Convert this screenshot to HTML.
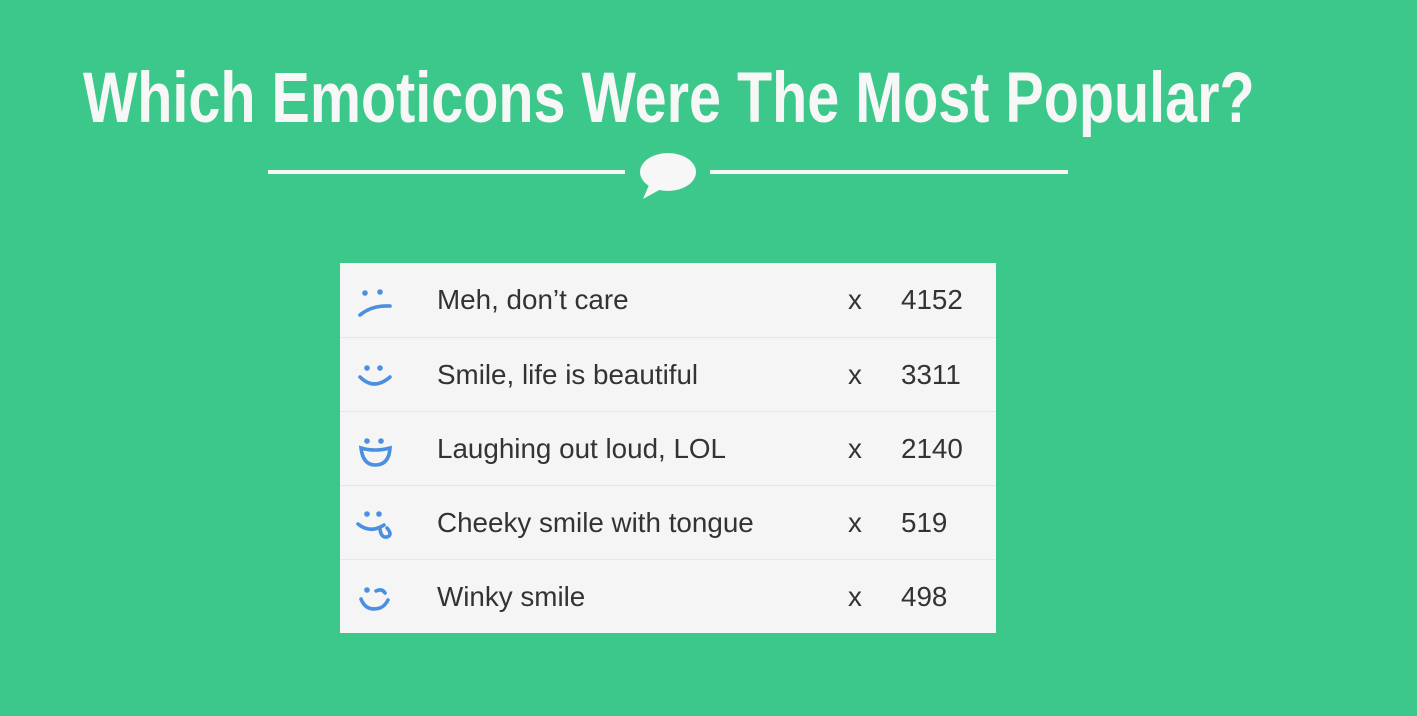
<!DOCTYPE html>
<html><head><meta charset="utf-8"><style>
html,body{margin:0;padding:0}
body{width:1417px;height:716px;background:#3dc88b;position:relative;overflow:hidden;font-family:"Liberation Sans",sans-serif}
h1{position:absolute;left:83px;top:54px;margin:0;font-family:"Liberation Sans Narrow","Liberation Sans",sans-serif;font-weight:bold;font-size:71px;line-height:90px;color:#f7f7f8;white-space:nowrap;transform-origin:0 0;transform:scaleX(0.81);letter-spacing:0px}
.line{position:absolute;top:170px;height:4px;background:#f7f7f8}
.tbl{position:absolute;left:340px;top:263px;width:656px;height:370px;background:#f5f5f5}
.row{position:relative;height:74px;border-top:1px solid #e6e6e6;box-sizing:border-box;font-size:27.8px;color:#333}
.row:first-child{border-top:none}
.row svg{position:absolute;left:16px;top:19px}
.row .t{position:absolute;left:97px;top:21px}
.row .x{position:absolute;left:508px;top:21px}
.row .n{position:absolute;left:561px;top:21px}
</style></head><body>
<h1>Which Emoticons Were The Most Popular?</h1>
<div class="line" style="left:268px;width:357px"></div>
<div class="line" style="left:710px;width:358px"></div>
<svg style="position:absolute;left:639px;top:151px" width="58" height="50" viewBox="0 0 58 50"><ellipse cx="29" cy="21" rx="28" ry="19" fill="#f7f7f8"/><path d="M10 34 L4 48 L22 38 Z" fill="#f7f7f8"/></svg>
<div class="tbl">
<div class="row"><svg width="40" height="40" viewBox="0 0 40 40" fill="none" stroke="#4a8fe0" stroke-width="3.6" stroke-linecap="round"><circle cx="9" cy="11" r="2.8" fill="#4a8fe0" stroke="none"/><circle cx="24" cy="10" r="2.8" fill="#4a8fe0" stroke="none"/><path d="M4 33 Q16 23 34 24"/></svg><span class="t">Meh, don’t care</span><span class="x">x</span><span class="n">4152</span></div>
<div class="row"><svg width="40" height="40" viewBox="0 0 40 40" fill="none" stroke="#4a8fe0" stroke-width="3.6" stroke-linecap="round"><circle cx="11" cy="11" r="2.8" fill="#4a8fe0" stroke="none"/><circle cx="24" cy="11" r="2.8" fill="#4a8fe0" stroke="none"/><path d="M4 20 Q18 34 34 20"/></svg><span class="t">Smile, life is beautiful</span><span class="x">x</span><span class="n">3311</span></div>
<div class="row"><svg width="40" height="40" viewBox="0 0 40 40" fill="none" stroke="#4a8fe0" stroke-width="3.6" stroke-linecap="round"><circle cx="11" cy="10" r="2.8" fill="#4a8fe0" stroke="none"/><circle cx="25" cy="10" r="2.8" fill="#4a8fe0" stroke="none"/><path d="M5 17 Q18 21 34 17 Q33 34 19 34 Q7 34 5 17 Z"/></svg><span class="t">Laughing out loud, LOL</span><span class="x">x</span><span class="n">2140</span></div>
<div class="row"><svg width="40" height="40" viewBox="0 0 40 40" fill="none" stroke="#4a8fe0" stroke-width="3.6" stroke-linecap="round"><circle cx="11" cy="9" r="2.8" fill="#4a8fe0" stroke="none"/><circle cx="23" cy="9" r="2.8" fill="#4a8fe0" stroke="none"/><path d="M2 19 Q14 29 28 20"/><path d="M24 24 Q25 33 31 32 Q37 30 31 23"/></svg><span class="t">Cheeky smile with tongue</span><span class="x">x</span><span class="n">519</span></div>
<div class="row"><svg width="40" height="40" viewBox="0 0 40 40" fill="none" stroke="#4a8fe0" stroke-width="3.6" stroke-linecap="round"><circle cx="11" cy="11" r="2.8" fill="#4a8fe0" stroke="none"/><path d="M20 12 Q26 9 29 14"/><path d="M5 20 Q10 33 24 29 Q29 27 32 21"/></svg><span class="t">Winky smile</span><span class="x">x</span><span class="n">498</span></div>
</div>
</body></html>
